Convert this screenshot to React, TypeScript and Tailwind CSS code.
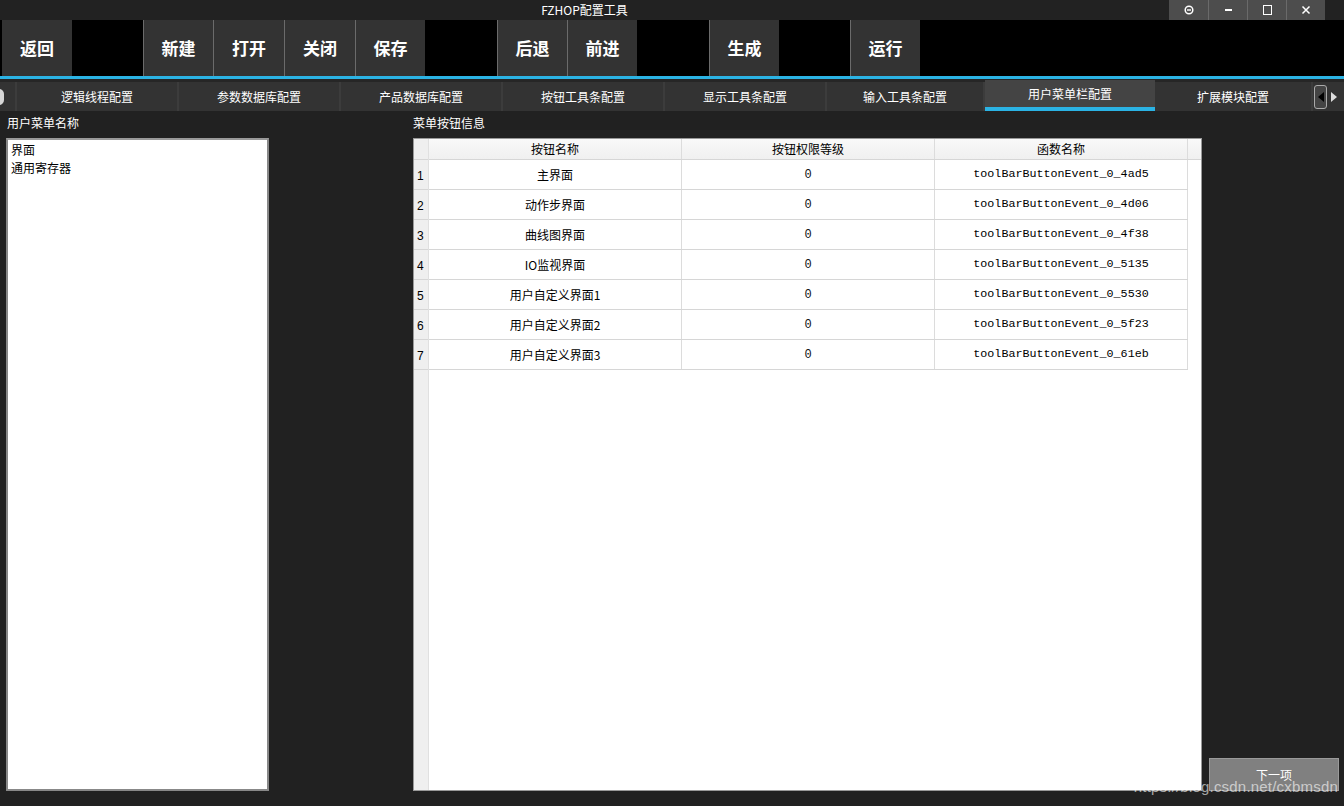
import React from "react";

const cjk = "font-['Noto_Sans_CJK_SC','Noto_Sans',sans-serif]";

// label or null (black gap), with pixel width
const toolbar: [string | null, string][] = [
  ["返回", "w-[70px]"],
  [null, "w-[71px]"],
  ["新建", "w-[70px]"],
  ["打开", "w-[71px]"],
  ["关闭", "w-[71px]"],
  ["保存", "w-[70px]"],
  [null, "w-[72px]"],
  ["后退", "w-[70px]"],
  ["前进", "w-[70px]"],
  [null, "w-[72px]"],
  ["生成", "w-[70px]"],
  [null, "w-[71px]"],
  ["运行", "w-[70px]"],
];

const tabs = ["逻辑线程配置", "参数数据库配置", "产品数据库配置", "按钮工具条配置", "显示工具条配置", "输入工具条配置", "用户菜单栏配置", "扩展模块配置"];
const tabWidths = ["w-[162px]", "w-[162px]", "w-[162px]", "w-[162px]", "w-[162px]", "w-[158px]", "w-[170px]", "w-[158px]"];

const rows = [
  ["主界面", "0", "toolBarButtonEvent_0_4ad5"],
  ["动作步界面", "0", "toolBarButtonEvent_0_4d06"],
  ["曲线图界面", "0", "toolBarButtonEvent_0_4f38"],
  ["IO监视界面", "0", "toolBarButtonEvent_0_5135"],
  ["用户自定义界面1", "0", "toolBarButtonEvent_0_5530"],
  ["用户自定义界面2", "0", "toolBarButtonEvent_0_5f23"],
  ["用户自定义界面3", "0", "toolBarButtonEvent_0_61eb"],
];

export default function App() {
  return (
    <div className={`relative w-[1344px] h-[806px] bg-[#212121] overflow-hidden flex flex-col ${cjk}`}>
      {/* title bar */}
      <div className="h-[20px] flex items-center bg-[#222222]">
        <div className="flex-1 text-center text-white text-[12px] leading-none">FZHOP配置工具</div>
        <div className="flex h-[20px] mr-[19px]">
          {[0, 1, 2, 3].map((i) => (
            <div key={i} className={`w-[39px] h-full bg-[#4d4d4d] flex items-center justify-center ${i > 0 ? "border-l border-[#6a6a6a]" : ""}`}>
              {i === 0 ? (
                <svg width="10" height="10" viewBox="0 0 10 10"><circle cx="5" cy="5" r="3.8" fill="none" stroke="white" strokeWidth="1.5" /><rect x="3" y="4.3" width="4" height="1.4" fill="white" /></svg>
              ) : i === 1 ? (
                <div className="w-[7px] h-[1.5px] bg-white" />
              ) : i === 2 ? (
                <div className="w-[9px] h-[10px] border-[1.5px] border-white" />
              ) : (
                <svg width="10" height="10" viewBox="0 0 10 10"><path d="M1.5 1.5 L8.5 8.5 M8.5 1.5 L1.5 8.5" stroke="white" strokeWidth="1.5" /></svg>
              )}
            </div>
          ))}
        </div>
      </div>

      {/* toolbar */}
      <div className="h-[56px] bg-black flex pl-[2px]">
        {toolbar.map(([t, w], i) =>
          t ? (
            <div key={i} className={`${w} h-full bg-[#333333] ${i > 0 ? "border-l border-[#6b6b6b]" : ""} flex items-center justify-center text-white text-[17px] font-bold`}>
              {t}
            </div>
          ) : (
            <div key={i} className={`${w} h-full bg-black`} />
          )
        )}
      </div>
      <div className="h-[3px] bg-[#2bb3e4]" />

      {/* tab bar */}
      <div className="h-[32px] bg-[#262626] flex items-end">
        <div className="h-[29px] w-[17px] bg-[#333333] flex items-center border-r-2 border-[#3c3c3c]">
          <div className="w-[5px] h-[16px] bg-white/80 rounded-r-full ml-[-1px]" />
        </div>
        {tabs.map((t, i) =>
          i === 6 ? (
            <div key={t} className={`${tabWidths[i]} h-[31px] bg-[#444444] flex flex-col`}>
              <div className="flex-1 flex items-center justify-center text-white text-[12px]">{t}</div>
              <div className="h-[4px] bg-[#2bb3e4]" />
            </div>
          ) : (
            <div key={t} className={`${tabWidths[i]} h-[29px] bg-[#333333] border-r-2 border-[#3c3c3c] flex items-center justify-center text-white text-[12px] pt-[1px]`}>
              {t}
            </div>
          )
        )}
        <div className="flex-1 h-[29px] bg-[#333333] flex items-center">
          <div className="w-[13px] h-[24px] ml-[1px] rounded-[3px] border border-[#aaaaaa] bg-[#444444] flex items-center justify-center">
            <svg width="6" height="10" viewBox="0 0 6 10"><path d="M6 0 L0 5 L6 10 Z" fill="black" /></svg>
          </div>
          <div className="w-[13px] flex items-center justify-center">
            <svg width="6" height="10" viewBox="0 0 6 10"><path d="M0 0 L6 5 L0 10 Z" fill="#dddddd" /></svg>
          </div>
        </div>
      </div>

      {/* content */}
      <div className="flex-1 flex pl-[6px] pt-[6px] pb-[15px]">
        <div className="w-[263px] flex flex-col">
          <div className="text-white text-[12px] leading-none h-[21px] pl-[1px]">用户菜单名称</div>
          <div className="flex-1 bg-white border-2 border-[#888888] border-t-[#9a9a9a] text-black text-[12px] leading-[18px] px-[3px] pt-[1px]">
            <div>界面</div>
            <div>通用寄存器</div>
          </div>
        </div>

        <div className="w-[789px] ml-[144px] flex flex-col">
          <div className="text-white text-[12px] leading-none h-[21px]">菜单按钮信息</div>
          <div className="flex-1 bg-white border border-[#999999] flex">
            <div className="w-[15px] bg-[#efefef] flex flex-col border-r border-[#e0e0e0]">
              <div className="h-[21px] border-b border-[#d6d6d6]" />
              {rows.map((_, i) => (
                <div key={i} className="h-[30px] border-b border-[#d6d6d6] flex items-center pl-[3px] pt-[2px] text-[12px] text-black font-['Liberation_Sans',sans-serif]">
                  {i + 1}
                </div>
              ))}
            </div>
            <div className="flex-1 flex flex-col">
              <div className="h-[21px] flex bg-gradient-to-b from-[#f9f9f9] to-[#f0f0f0] border-b border-[#d6d6d6] text-[12px] text-black">
                <div className="w-[253px] border-r border-[#dcdcdc] flex items-center justify-center">按钮名称</div>
                <div className="w-[253px] border-r border-[#dcdcdc] flex items-center justify-center">按钮权限等级</div>
                <div className="w-[253px] border-r border-[#dcdcdc] flex items-center justify-center">函数名称</div>
                <div className="flex-1" />
              </div>
              {rows.map((r) => (
                <div key={r[2]} className="h-[30px] w-[759px] flex border-b border-[#d6d6d6] text-[12px] text-black">
                  <div className="w-[253px] border-r border-[#dcdcdc] flex items-center justify-center">{r[0]}</div>
                  <div className="w-[253px] border-r border-[#dcdcdc] flex items-center justify-center font-['Liberation_Mono',monospace] text-[#111111]">{r[1]}</div>
                  <div className="w-[253px] border-r border-[#dcdcdc] flex items-center justify-center font-['Liberation_Mono',monospace] text-[11.7px]">{r[2]}</div>
                </div>
              ))}
            </div>
          </div>
        </div>

        <div className="flex-1 flex flex-col justify-end pl-[7px] pr-[5px]">
          <div className="h-[33px] bg-[#808080] border border-[#9a9a9a] flex items-center justify-center text-white text-[12px]">下一项</div>
        </div>
      </div>

      {/* watermark */}
      <div className="absolute right-[6px] bottom-[8px] text-[15px] text-white/60 font-['Liberation_Sans',sans-serif] tracking-[0.2px]">
        https://blog.csdn.net/cxbmsdn
      </div>
    </div>
  );
}
